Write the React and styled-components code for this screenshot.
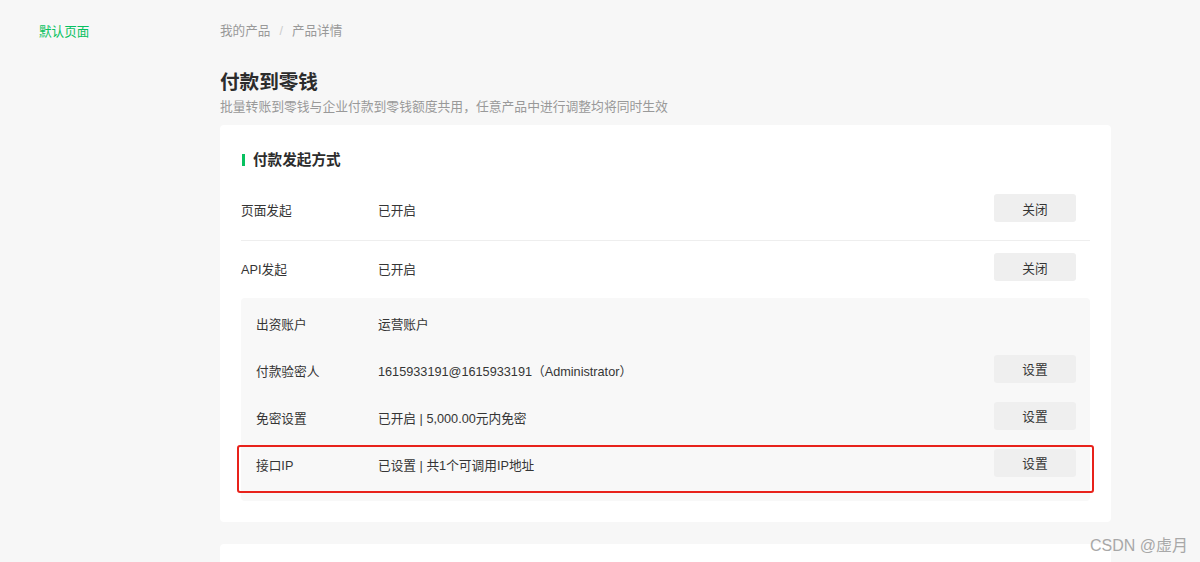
import React from 'react';
import styled, { createGlobalStyle } from 'styled-components';

const GlobalStyle = createGlobalStyle`
  body {
    margin: 0;
    background: #f7f7f7;
    font-family: "Liberation Sans", "Noto Sans CJK SC", sans-serif;
    color: #353535;
    overflow: hidden;
  }
`;

const Page = styled.div`
  display: flex;
  height: 562px;
  position: relative;
`;

const Sidebar = styled.div`
  width: 181px;
  padding: 22px 0 0 39px;
  font-size: 12.6px;
  line-height: 20px;
  color: #07c160;
`;

const Main = styled.div`
  width: 891px;
  padding-top: 21px;
`;

const Crumbs = styled.div`
  display: flex;
  align-items: center;
  gap: 9px;
  font-size: 12.6px;
  line-height: 20px;
  color: #999;

  .sep {
    color: #ccc;
  }
`;

const Title = styled.h1`
  margin: 27px 0 0;
  font-size: 19.6px;
  line-height: 28px;
  font-weight: bold;
  color: #2c2c2c;
`;

const Desc = styled.p`
  margin: 1px 0 0;
  font-size: 12.8px;
  line-height: 20px;
  color: #999;
`;

const Card = styled.div`
  margin-top: 8px;
  background: #fff;
  border-radius: 4px;
  padding: 24px 21px 21px;
`;

const SectionTitle = styled.h2`
  display: flex;
  align-items: center;
  gap: 8px;
  margin: 0 0 11px 1px;
  font-size: 14.6px;
  line-height: 22px;
  font-weight: bold;
  color: #2c2c2c;

  &::before {
    content: '';
    width: 3px;
    height: 12px;
    background: #07c160;
  }
`;

const Row = styled.div`
  display: flex;
  align-items: center;
  padding: ${p => (p.divided ? '12px 0 18px' : '12px 0 17px')};
  font-size: 12.7px;
  border-bottom: ${p => (p.divided ? '1px solid #eee' : 'none')};

  & > button {
    margin-right: 14px;
  }
`;

const Label = styled.div`
  width: ${p => p.width}px;
  flex-shrink: 0;
  padding-top: 3px;
`;

const Value = styled.div`
  flex: 1;
  padding-top: 3px;
`;

const Button = styled.button`
  width: 82px;
  height: 28px;
  border: none;
  border-radius: 3px;
  background: #efefef;
  color: #353535;
  font-family: inherit;
  font-size: 12.7px;
  cursor: pointer;
`;

const Panel = styled.div`
  background: #f8f8f8;
  border-radius: 4px;
  padding: 0 14px 15px 15px;
`;

const PanelRow = styled.div`
  position: relative;
  display: flex;
  align-items: center;
  height: 47px;
  font-size: 12.7px;

  ${p =>
    p.marked &&
    `
    &::after {
      content: '';
      position: absolute;
      top: 6px;
      bottom: -7px;
      left: -19px;
      right: -18px;
      border: 2px solid #e8221b;
      border-radius: 3px;
      pointer-events: none;
    }
  `}
`;

const NextCard = styled.div`
  margin-top: 22px;
  height: 60px;
  background: #fff;
  border-radius: 4px;
`;

const Watermark = styled.div`
  position: absolute;
  right: 12px;
  bottom: 6px;
  font-size: 16px;
  color: #a8a8a8;
`;

const panelRows = [
  { label: '出资账户', value: '运营账户' },
  { label: '付款验密人', value: '1615933191@1615933191（Administrator）', action: '设置' },
  { label: '免密设置', value: '已开启 | 5,000.00元内免密', action: '设置' },
  { label: '接口IP', value: '已设置 | 共1个可调用IP地址', action: '设置', marked: true },
];

const App = () => {
  return (
    <>
      <GlobalStyle />
      <Page>
        <Sidebar>默认页面</Sidebar>
        <Main>
          <Crumbs>
            <span>我的产品</span>
            <span className="sep">/</span>
            <span>产品详情</span>
          </Crumbs>
          <Title>付款到零钱</Title>
          <Desc>批量转账到零钱与企业付款到零钱额度共用，任意产品中进行调整均将同时生效</Desc>
          <Card>
            <SectionTitle>付款发起方式</SectionTitle>
            <Row divided>
              <Label width={137}>页面发起</Label>
              <Value>已开启</Value>
              <Button>关闭</Button>
            </Row>
            <Row>
              <Label width={137}>API发起</Label>
              <Value>已开启</Value>
              <Button>关闭</Button>
            </Row>
            <Panel>
              {panelRows.map(r => (
                <PanelRow key={r.label} marked={r.marked}>
                  <Label width={122}>{r.label}</Label>
                  <Value>{r.value}</Value>
                  {r.action && <Button>{r.action}</Button>}
                </PanelRow>
              ))}
            </Panel>
          </Card>
          <NextCard />
        </Main>
        <Watermark>CSDN @虚月</Watermark>
      </Page>
    </>
  );
};

export default App;
